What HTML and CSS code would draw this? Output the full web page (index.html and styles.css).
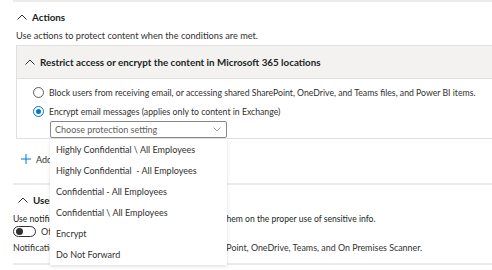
FILE: index.html
```html
<!DOCTYPE html>
<html>
<head>
<meta charset="utf-8">
<link rel="stylesheet" href="styles.css">
</head>
<body>
<div class="page">
  <div class="rule rule-top"></div>
  <section class="section">
    <div class="sec-head">
      <svg class="chev" width="10" height="6" viewBox="0 0 10 6"><polyline points="0.5,5.5 5,1 9.5,5.5" fill="none" stroke="#323130" stroke-width="1"/></svg>
      <span class="sec-title">Actions</span>
    </div>
    <p class="desc desc-actions">Use actions to protect content when the conditions are met.</p>
    <div class="box">
      <div class="box-head">
        <svg class="chev" width="10" height="6" viewBox="0 0 10 6"><polyline points="0.5,5.5 5,1 9.5,5.5" fill="none" stroke="#323130" stroke-width="1"/></svg>
        <span class="box-title">Restrict access or encrypt the content in Microsoft 365 locations</span>
      </div>
      <div class="box-body">
        <label class="radio-row"><span class="radio"></span><span>Block users from receiving email, or accessing shared SharePoint, OneDrive, and Teams files, and Power BI items.</span></label>
        <label class="radio-row"><span class="radio radio-on"></span><span>Encrypt email messages (applies only to content in Exchange)</span></label>
        <div class="dropdown-wrap">
          <div class="dropdown">
            <span class="placeholder">Choose protection setting</span>
            <svg class="dd-chev" width="8" height="5" viewBox="0 0 8 5"><polyline points="0.5,0.5 4,4 7.5,0.5" fill="none" stroke="#a19f9d" stroke-width="1"/></svg>
          </div>
          <ul class="menu">
            <li>Highly Confidential \ All Employees</li>
            <li>Highly Confidential &nbsp;- All Employees</li>
            <li>Confidential - All Employees</li>
            <li>Confidential \ All Employees</li>
            <li>Encrypt</li>
            <li>Do Not Forward</li>
          </ul>
        </div>
      </div>
    </div>
    <div class="add-row">
      <svg class="plus" width="10" height="10" viewBox="0 0 10 10"><path d="M5 0V10M0 5H10" stroke="#0078d4" stroke-width="1" fill="none"/></svg>
      <span>Add action</span>
    </div>
  </section>
  <div class="rule rule-mid"></div>
  <section class="section">
    <div class="sec-head sec-head-user">
      <svg class="chev" width="10" height="6" viewBox="0 0 10 6"><polyline points="0.5,5.5 5,1 9.5,5.5" fill="none" stroke="#323130" stroke-width="1"/></svg>
      <span class="sec-title">User notifications</span>
    </div>
    <p class="desc desc-user">Use notifications to inform your users and help educate them on the proper use of sensitive info.</p>
    <div class="toggle-row">
      <span class="toggle"><span class="thumb"></span></span>
      <span>Off</span>
    </div>
    <p class="desc desc-note">Notifications will be shown to users in Exchange, SharePoint, OneDrive, Teams, and On Premises Scanner.</p>
  </section>
  <div class="rule rule-bottom"></div>
</div>
</body>
</html>
```

FILE: styles.css
```css
* { box-sizing: border-box; }
html, body {
  margin: 0;
  padding: 0;
  background: #ffffff;
}
body {
  width: 492px;
  height: 270px;
  overflow: hidden;
  font-family: Lato, "Open Sans", sans-serif;
  font-size: 9px;
  color: #323130;
}
.page {
  display: flex;
  flex-direction: column;
}
.rule {
  margin-left: 13px;
  height: 2px;
  background: #edebe9;
}
.rule-top { margin-top: 0; }
.section {
  display: flex;
  flex-direction: column;
}
.sec-head {
  display: flex;
  align-items: center;
  height: 20px;
  margin-top: 5px;
  padding-left: 17px;
  gap: 5px;
}
.sec-head-user {
  margin-top: 5px;
  padding-left: 18px;
}
.chev { display: block; flex: none; }
.sec-title {
  font-weight: 700;
  font-size: 9.8px;
  color: #201f1e;
}
.desc {
  margin: 0;
  line-height: 12px;
  white-space: nowrap;
}
.desc-actions {
  margin-top: 3px;
  padding-left: 16px;
  font-size: 9.2px;
}
.box {
  margin-top: 3px;
  margin-left: 16px;
  border: 1px solid #e1dfdd;
  border-right: none;
}
.box-head {
  height: 33px;
  display: flex;
  align-items: center;
  gap: 5px;
  padding-left: 8px;
  background: #f3f2f1;
  border-bottom: 1px solid #e1dfdd;
}
.box-title {
  font-weight: 700;
  font-size: 9.8px;
  color: #201f1e;
}
.box-body {
  display: flex;
  flex-direction: column;
  padding-top: 4px;
  padding-left: 16px;
}
.radio-row {
  display: flex;
  align-items: center;
  height: 19px;
  gap: 5px;
  white-space: nowrap;
  font-size: 8.7px;
}
.radio {
  width: 11px;
  height: 11px;
  border-radius: 50%;
  border: 1px solid #605e5c;
  flex: none;
  background: #fff;
}
.radio-on {
  border-color: #0078d4;
  position: relative;
}
.radio-on::after {
  content: "";
  position: absolute;
  left: 2px;
  top: 2px;
  width: 5px;
  height: 5px;
  border-radius: 50%;
  background: #0078d4;
}
.dropdown-wrap {
  position: relative;
  margin-left: 17px;
  width: 177px;
}
.dropdown {
  height: 17px;
  border: 1px solid #8a8886;
  border-radius: 2px;
  display: flex;
  align-items: center;
  justify-content: space-between;
  padding: 0 4px 0 4px;
  background: #fff;
}
.placeholder { color: #605e5c; }
.dd-chev { display: block; margin-right: 1px; }
.menu {
  position: absolute;
  left: 0;
  top: 18px;
  width: 177px;
  margin: 0;
  padding: 0;
  list-style: none;
  background: #fff;
  box-shadow: 0 1.6px 3.6px rgba(0,0,0,0.13), 0 0.3px 0.9px rgba(0,0,0,0.11);
  z-index: 10;
}
.menu li {
  height: 21px;
  line-height: 21px;
  padding-left: 6px;
  white-space: nowrap;
  color: #323130;
}
.add-row {
  display: flex;
  align-items: center;
  gap: 5px;
  height: 20px;
  margin-top: 10px;
  padding-left: 21px;
}
.plus { display: block; flex: none; }
.rule-mid { margin-top: 14px; }
.desc-user {
  margin-top: 3px;
  padding-left: 13px;
  font-size: 8.6px;
  color: #201f1e;
}
.toggle-row {
  display: flex;
  align-items: center;
  gap: 5px;
  height: 13px;
  padding-left: 13px;
}
.toggle {
  width: 23px;
  height: 11px;
  border: 1px solid #323130;
  border-radius: 6px;
  display: flex;
  align-items: center;
  padding-left: 2px;
}
.thumb {
  width: 7px;
  height: 7px;
  border-radius: 50%;
  background: #323130;
}
.desc-note {
  margin-top: 4px;
  padding-left: 13px;
  font-size: 8.9px;
}
.rule-bottom { margin-top: 9px; }
```
